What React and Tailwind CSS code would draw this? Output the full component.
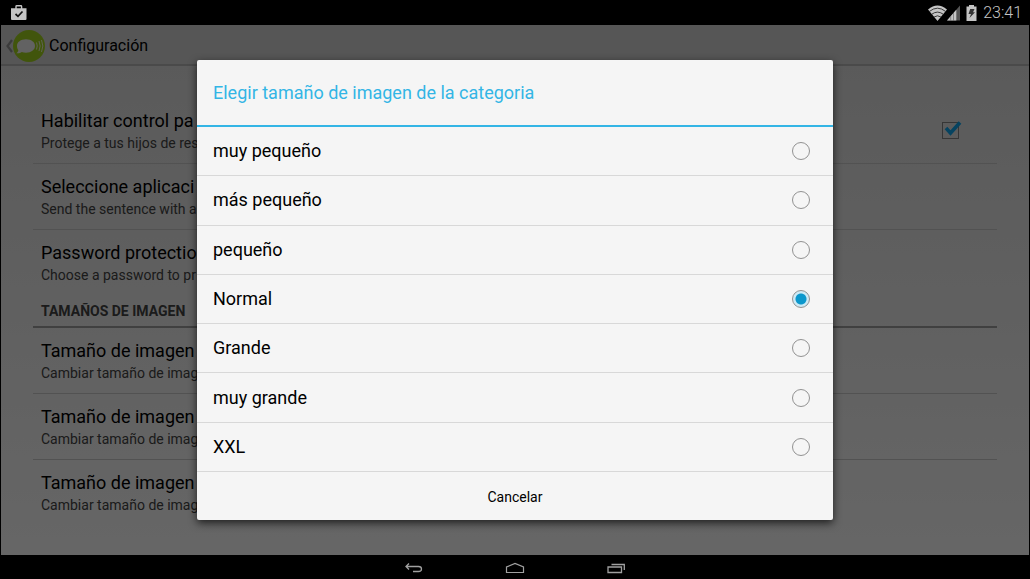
import { useState } from "react";

const sizes = ["muy pequeño", "más pequeño", "pequeño", "Normal", "Grande", "muy grande", "XXL"];

const general = [
  { title: "Habilitar control pa", detail: "Protege a tus hijos de res", toggle: true, line: true },
  { title: "Seleccione aplicaci", detail: "Send the sentence with a", line: true },
  { title: "Password protectio", detail: "Choose a password to pr" },
];

const imageSizes = [
  { title: "Tamaño de imagen", detail: "Cambiar tamaño de imag", line: true },
  { title: "Tamaño de imagen", detail: "Cambiar tamaño de imag", line: true },
  { title: "Tamaño de imagen", detail: "Cambiar tamaño de imag" },
];

function StatusBar() {
  return (
    <header className="flex h-[25px] shrink-0 items-center bg-black pl-2.5 pr-2 text-[#c4c4c4]">
      <svg className="h-4 w-[17px]" viewBox="0 0 17 16" aria-hidden="true">
        <path d="M6 4V1.400Q6 0.700 6.700 0.700h4.200q.7 0 .7.7V4" fill="none" stroke="currentColor" strokeWidth="1.400" />
        <path d="M1 3.200h15.500V14q0 1-1 1H2q-1 0-1-1z" fill="currentColor" />
        <path d="M5.500 9l2.500 2.300 4.500-4.800" fill="none" stroke="#111" strokeWidth="1.700" />
      </svg>
      <div className="ml-auto flex items-center">
        <svg className="h-4 w-[19px]" viewBox="0 0 20 16" preserveAspectRatio="none" aria-hidden="true">
          <path d="M0 4.500Q10-3.500 20 4.500L10 16z" fill="currentColor" />
          <path d="M1.500 6.400Q10 0 18.500 6.400M4 9.200q6-4.200 12 0M6.400 12q3.600-2.400 7.200 0" fill="none" stroke="#222" strokeWidth="0.900" />
        </svg>
        <svg className="h-4 w-[13px]" viewBox="0 0 14 16" preserveAspectRatio="none" aria-hidden="true">
          <path d="M0 15.500L14 0.500v15z" fill="#555" />
          <path d="M0 15.500L10 4.800v10.700z" fill="currentColor" />
          <path d="M4 11v5M7 8v8" stroke="#666" strokeWidth="0.700" />
        </svg>
        <svg className="ml-1.5 h-4 w-[11px]" viewBox="0 0 11 16" aria-hidden="true">
          <path d="M3 0h5v1.500h2.500V16H0.500V1.500H3z" fill="currentColor" />
          <path d="M4.200 4h4.300L7 7.300h2L3.500 13 5 9H2.500z" fill="#333" />
        </svg>
        <time className="ml-1.5 text-base font-light">23:41</time>
      </div>
    </header>
  );
}

function ActionBar() {
  return (
    <div className="flex h-[41px] shrink-0 items-center border-b-2 border-[#b8b8b8] bg-[#d6d6d6] pl-1 pt-0.5">
      <button type="button" className="flex items-center" aria-label="Atrás">
        <svg className="h-4 w-2" viewBox="0 0 8 16" aria-hidden="true">
          <path d="M7 2L2.500 8 7 14" fill="none" stroke="#949494" strokeWidth="2.200" />
        </svg>
        <svg className="h-8 w-8" viewBox="0 0 32 32" aria-hidden="true">
          <circle cx="16" cy="16" r="16" fill="#a4d420" />
          <path d="M13 9.300c5.200 0 9 2.800 9 6.700s-3.800 6.700-9 6.700c-1.600 0-3-.2-4.200-.7-1.200.9-3.100 1.400-5.300 1.200 1.100-.8 1.800-1.900 1.800-3C4.500 19.100 4 17.600 4 16c0-3.900 3.800-6.700 9-6.700z" fill="#f4f4f4" />
          <path d="M23.500 12.500q1.500 3.500 0 7M26 11q2.300 5 0 10M28.500 10q2.700 6 0 12" fill="none" stroke="#eef6d2" strokeWidth="1" />
        </svg>
      </button>
      <h1 className="ml-1 text-base">Configuración</h1>
    </div>
  );
}

function Preference({ title, detail, toggle, line }) {
  const text = (
    <span className="block">
      <span className="block text-lg leading-6">{title}</span>
      <span className="block text-sm leading-5 text-[#444444]">{detail}</span>
    </span>
  );
  const border = line ? "border-b border-[#cccccc]" : "";
  if (toggle) {
    return (
      <label className={`flex h-[66px] w-full items-center justify-between pl-2 pr-[38px] ${border}`}>
        {text}
        <span className="relative block h-[17px] w-[17px]">
          <input type="checkbox" defaultChecked className="peer block h-[17px] w-[17px] appearance-none border border-[#888]" />
          <svg className="pointer-events-none absolute -top-0.5 left-0.5 hidden h-[17px] w-[18px] peer-checked:block" viewBox="0 0 18 17" aria-hidden="true">
            <path d="M2 8l4.500 5L16 2.500" fill="none" stroke="#10a8f0" strokeWidth="3.600" />
          </svg>
        </span>
      </label>
    );
  }
  return (
    <button type="button" className={`flex h-[66px] w-full items-center pl-2 text-left ${border}`}>
      {text}
    </button>
  );
}

function SizeDialog() {
  const [size, setSize] = useState("Normal");
  return (
    <section role="dialog" aria-modal="true" aria-labelledby="dialog-title" className="w-full max-w-[636px] rounded-[2px] bg-[#f5f5f5] shadow-[0_3px_8px_rgba(0,0,0,0.7)]">
      <h2 id="dialog-title" className="flex h-[67px] items-center border-b-2 border-[#33b5e5] px-4 text-lg text-[#33b5e5]">
        Elegir tamaño de imagen de la categoria
      </h2>
      <div role="radiogroup" aria-labelledby="dialog-title" className="grid min-h-[345px] auto-rows-fr">
        {sizes.map((name) => (
          <label key={name} className="flex items-center justify-between border-b border-[#d8d8d8] pl-4 pr-[23px] text-lg text-black">
            {name}
            <input
              type="radio"
              name="size"
              checked={size === name}
              onChange={() => setSize(name)}
              className="h-[18px] w-[18px] appearance-none rounded-full border border-[#929292] checked:bg-[radial-gradient(circle,#0b97cc_5px,#cdeaf5_6px)]"
            />
          </label>
        ))}
      </div>
      <button type="button" className="block h-12 w-full pt-0.5 text-sm text-black">Cancelar</button>
    </section>
  );
}

function NavBar() {
  return (
    <nav className="flex h-6 shrink-0 items-center justify-center gap-[81px] bg-black pt-0.5 text-[#a0a0a0]">
      <button type="button" aria-label="Volver" className="flex w-5 justify-center">
        <svg className="h-3 w-5" viewBox="0 0 20 12" fill="none" stroke="currentColor" aria-hidden="true">
          <path d="M5 1.500L2 4.500l3 3M2 4.500h12.500q3 0 3 2.500t-3 2.500H9" strokeWidth="1.300" />
        </svg>
      </button>
      <button type="button" aria-label="Inicio" className="flex w-5 justify-center">
        <svg className="h-3 w-5" viewBox="0 0 20 12" fill="none" stroke="currentColor" aria-hidden="true">
          <path d="M1.500 10.500V5L10 1.500 18.500 5v5.500z" strokeWidth="1.200" />
        </svg>
      </button>
      <button type="button" aria-label="Recientes" className="flex w-5 justify-center">
        <svg className="h-3 w-5" viewBox="0 0 20 12" fill="none" stroke="currentColor" aria-hidden="true">
          <path d="M2 5h13.500v5.500H2z" strokeWidth="1.300" />
          <path d="M5.500 2.500h12.800V8" strokeWidth="1.300" />
        </svg>
      </button>
    </nav>
  );
}

export default function App() {
  return (
    <div className="flex min-h-screen flex-col bg-black font-['Roboto','Liberation_Sans',sans-serif]">
      <StatusBar />
      <div className="relative mx-px flex flex-1 flex-col">
        <ActionBar />
        <main className="flex-1 bg-linear-to-b from-[#e2e2e2] to-[#ffffff] px-8 pt-8 text-black">
          {general.map((item) => (
            <Preference key={item.title} {...item} />
          ))}
          <h2 className="flex h-8 items-center border-b-2 border-[#a0a0a0] pl-2 text-sm font-bold text-[#444444]">TAMAÑOS DE IMAGEN</h2>
          {imageSizes.map((item, index) => (
            <Preference key={index} {...item} />
          ))}
        </main>
        <div className="absolute inset-0 flex items-center justify-center bg-black/60">
          <SizeDialog />
        </div>
      </div>
      <NavBar />
    </div>
  );
}
